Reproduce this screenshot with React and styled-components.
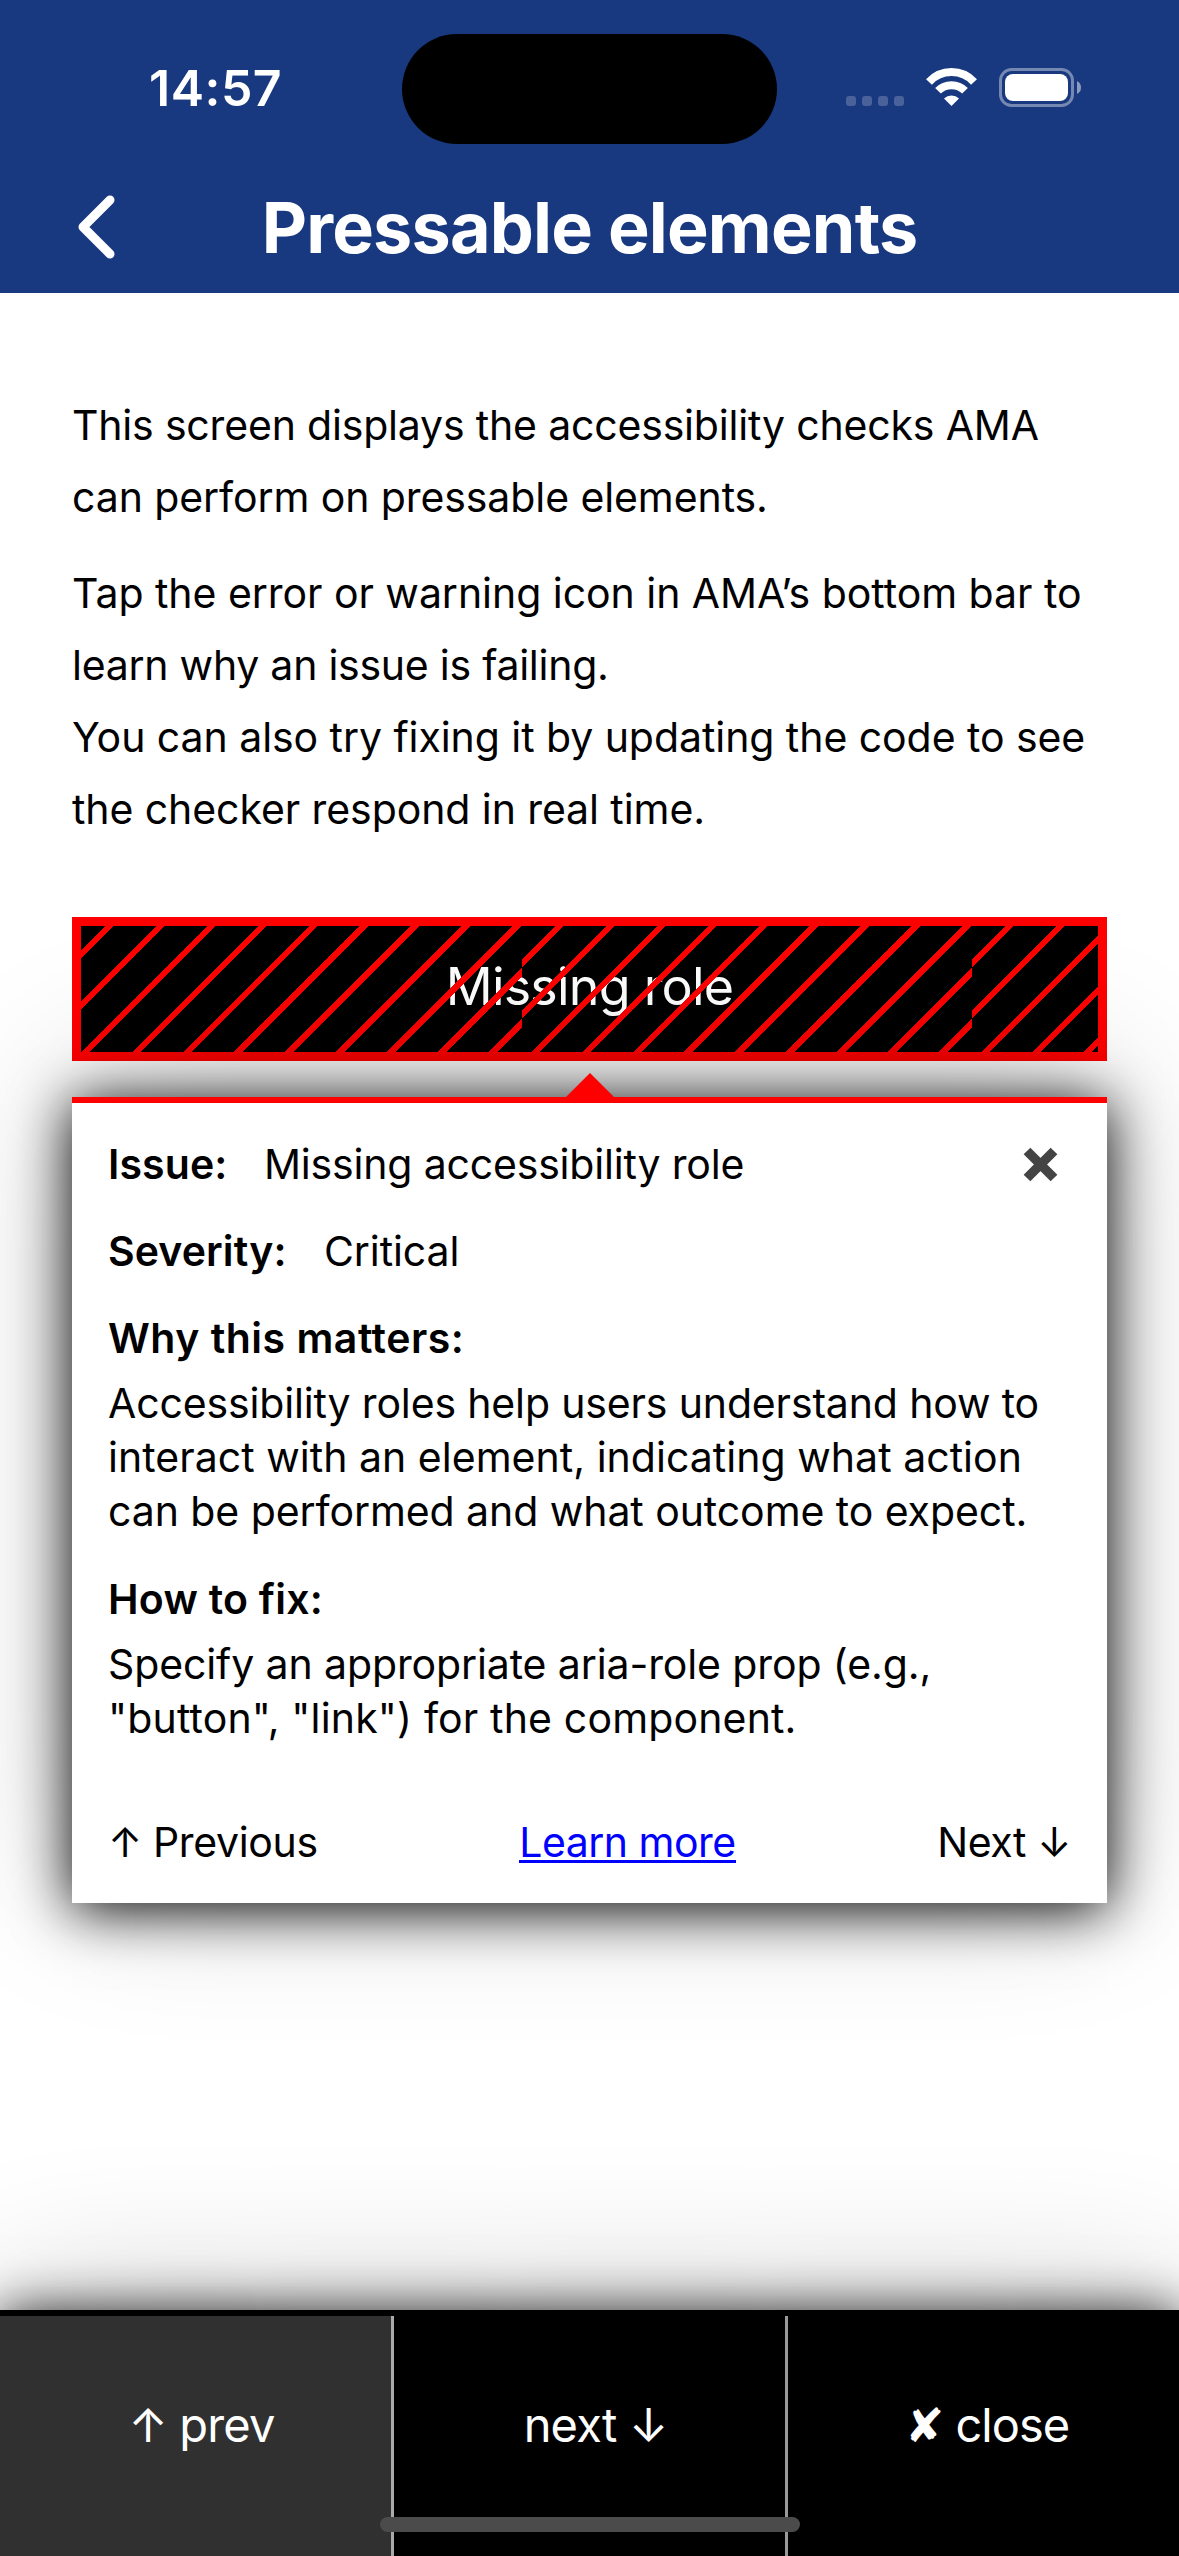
import React from "react";
import styled, { createGlobalStyle, css } from "styled-components";

const Global = createGlobalStyle`
  * { box-sizing: border-box; }
  html, body { margin: 0; padding: 0; background: #fff; }
  body {
    font-family: Inter, "Liberation Sans", sans-serif;
    font-variant-ligatures: none;
    color: #000;
  }
`;

const Screen = styled.main`
  position: relative;
  display: flex;
  flex-direction: column;
  width: 1179px;
  height: 2556px;
  overflow: hidden;
  background: #fff;
`;

const Header = styled.header`
  display: flex;
  flex-direction: column;
  height: 293px;
  background: #18387f;
  color: #fff;
`;

const StatusBar = styled.div`
  display: grid;
  grid-template-columns: 402px 375px 1fr;
  height: 178px;
  padding-top: 34px;
`;

const Clock = styled.time`
  height: 110px;
  padding-left: 149px;
  font-size: 50px;
  font-weight: 600;
  line-height: 108px;
  letter-spacing: ${(p) => p.$tracking}px;
`;

const Island = styled.div`
  height: 110px;
  border-radius: 55px;
  background: #000;
`;

const StatusIcons = styled.div`
  padding: 34px 0 0 69px;
  svg { display: block; }
`;

const TitleBar = styled.div`
  display: grid;
  grid-template-columns: 192px 1fr 192px;
  align-items: center;
  height: 100px;
`;

const BackButton = styled.button`
  display: flex;
  height: 100px;
  padding: 16px 0 0 76px;
  border: 0;
  background: none;
`;

const Title = styled.h1`
  margin: 0;
  font-size: 70px;
  font-weight: 700;
  line-height: 100px;
  text-align: center;
  white-space: nowrap;
  letter-spacing: ${(p) => p.$tracking}px;
`;

const Content = styled.section`
  flex: 1;
  padding: 96px 72px 0;
`;

const Paragraph = styled.p`
  margin: 0 0 24px;
  font-size: 41px;
  line-height: ${(p) => (p.$compact ? 54 : 72)}px;
  ${(p) => p.$compact && css`margin: 0;`}
`;

const Line = styled.span`
  display: block;
  white-space: nowrap;
  letter-spacing: ${(p) => p.$tracking || 0}px;
`;

const Pressable = styled.button`
  position: relative;
  display: block;
  width: 1035px;
  height: 144px;
  margin-top: 72px;
  padding: 0 0 5px;
  border: 9px solid #f00;
  background: #000;
  color: #fff;
  font: 400 52px/120px Inter, sans-serif;
  letter-spacing: ${(p) => p.$tracking}px;
`;

const Stripes = styled.span`
  position: absolute;
  inset: -9px;
  border: 9px solid #f00;
  background-image: repeating-linear-gradient(135deg, transparent 0 30px, #f00 30px 36px);
  background-size: 450px 450px;
  background-origin: border-box;
`;

const Card = styled.article`
  position: relative;
  height: 806px;
  margin-top: 36px;
  padding: 34px 36px;
  border-top: 6px solid #f00;
  background: #fff;
  font-size: 41px;
  line-height: 54px;
  box-shadow: 0 6px 54px rgba(0, 0, 0, 0.98), 0 -20px 150px rgba(0, 0, 0, 0.2);
`;

const Pointer = styled.i`
  position: absolute;
  left: 494px;
  top: -30px;
  border: solid transparent;
  border-width: 0 24px 24px;
  border-bottom-color: #f00;
`;

const Row = styled.div`
  display: flex;
  align-items: flex-start;
  margin-bottom: 33px;
`;

const Label = styled.strong`
  width: ${(p) => p.$width}px;
  font-weight: 600;
  white-space: nowrap;
  letter-spacing: ${(p) => p.$tracking || 0}px;
`;

const Heading = styled.h2`
  margin: ${(p) => p.$top || 0}px 0 11px;
  font-size: 41px;
  font-weight: 600;
  letter-spacing: ${(p) => p.$tracking || 0}px;
`;

const CloseButton = styled.button`
  margin-left: auto;
  padding: 10px 13px 0 0;
  border: 0;
  background: none;
  svg { display: block; }
`;

const CardFooter = styled.footer`
  display: flex;
  justify-content: space-between;
  margin-top: 70px;
`;

const Nav = styled.span`
  white-space: pre;
  letter-spacing: ${(p) => p.$tracking || 0}px;
`;

const Learn = styled.a`
  height: 48px;
  border-bottom: 3px solid #00f;
  color: #00f;
  letter-spacing: ${(p) => p.$tracking || 0}px;
`;

const BottomBar = styled.nav`
  position: relative;
  display: grid;
  grid-template-columns: 394px 394px 1fr;
  height: 246px;
  border-top: 6px solid #000;
  background: #000;
  color: #fff;
  box-shadow: 0 6px 54px rgba(0, 0, 0, 0.98), 0 -10px 160px rgba(0, 0, 0, 0.2);
`;

const Tab = styled.button`
  padding: 0 0 22px ${(p) => (p.$line ? 12 : 7)}px;
  border: 0;
  border-right: ${(p) => (p.$line ? `3px solid ${p.$line}` : "0")};
  background: ${(p) => (p.$dim ? "#303030" : "#000")};
  color: #fff;
  font: 400 47px/60px Inter, "DejaVu Sans", sans-serif;
  white-space: pre;
  letter-spacing: ${(p) => p.$tracking || 0}px;
`;

const HomeIndicator = styled.div`
  position: absolute;
  left: 380px;
  bottom: 24px;
  width: 420px;
  height: 15px;
  border-radius: 8px;
  background: #4b4b4b;
`;

const StatusGlyphs = () => (
  <svg width="236" height="40" viewBox="0 0 236 40">
    {[0, 16, 32, 48].map((x) => (
      <rect key={x} x={x} y="28" width="10" height="10" rx="3" fill="#4a629a" />
    ))}
    <g fill="none" stroke="#fff" strokeWidth="8">
      <path d="M83 14 A30.5 30.5 0 0 1 128 14" />
      <path d="M92 22.8 A19 19 0 0 1 119 22.8" />
    </g>
    <path d="M105.500 38 L98 30.500 A11 11 0 0 1 113 30.500 Z" fill="#fff" />
    <rect x="154.500" y="1.500" width="72" height="36" rx="11" fill="none" stroke="#7488b2" strokeWidth="3" />
    <rect x="159" y="6" width="63" height="27" rx="8" fill="#fff" />
    <path d="M231 13 Q235 15 235 19.500 Q235 24 231 26 Z" fill="#8c9bbf" />
  </svg>
);

export default function App() {
  return (
    <>
      <Global />
      <Screen>
        <Header>
          <StatusBar>
            <Clock $tracking={0.5}>14:57</Clock>
            <Island />
            <StatusIcons><StatusGlyphs /></StatusIcons>
          </StatusBar>
          <TitleBar>
            <BackButton aria-label="Back">
              <svg width="42" height="66" viewBox="0 0 42 66">
                <path d="M34 6 L7 33 L34 60" fill="none" stroke="#fff" strokeWidth="9" strokeLinecap="round" strokeLinejoin="round" />
              </svg>
            </BackButton>
            <Title $tracking={-0.8}>Pressable elements</Title>
          </TitleBar>
        </Header>
        <Content>
          <Paragraph>
            <Line $tracking={-0.18}>This screen displays the accessibility checks AMA</Line>
            <Line $tracking={-0.09}>can perform on pressable elements.</Line>
          </Paragraph>
          <Paragraph>
            <Line $tracking={-0.04}>Tap the error or warning icon in AMA’s bottom bar to</Line>
            <Line $tracking={-0.25}>learn why an issue is failing.</Line>
            <Line $tracking={-0.06}>You can also try fixing it by updating the code to see</Line>
            <Line $tracking={-0.08}>the checker respond in real time.</Line>
          </Paragraph>
          <Pressable $tracking={-0.8}>
            Missing role
            <Stripes />
          </Pressable>
          <Card>
            <Pointer />
            <Row>
              <Label $width={156} $tracking={0.1}>Issue:</Label>
              <Line $tracking={-0.18}>Missing accessibility role</Line>
              <CloseButton aria-label="Close">
                <svg width="35" height="35" viewBox="0 0 35 35">
                  <path d="M4 4 L31 31 M31 4 L4 31" stroke="#444" strokeWidth="9.500" />
                </svg>
              </CloseButton>
            </Row>
            <Row>
              <Label $width={216} $tracking={0.1}>Severity:</Label>
              <Line $tracking={-0.1}>Critical</Line>
            </Row>
            <Heading $tracking={0.5}>Why this matters:</Heading>
            <Paragraph $compact>
              <Line $tracking={-0.15}>Accessibility roles help users understand how to</Line>
              <Line $tracking={0.03}>interact with an element, indicating what action</Line>
              <Line $tracking={-0.07}>can be performed and what outcome to expect.</Line>
            </Paragraph>
            <Heading $top={34} $tracking={0.25}>How to fix:</Heading>
            <Paragraph $compact>
              <Line $tracking={-0.11}>Specify an appropriate aria-role prop (e.g.,</Line>
              <Line $tracking={0.16}>"button", "link") for the component.</Line>
            </Paragraph>
            <CardFooter>
              <Nav $tracking={-0.35}>↑ Previous</Nav>
              <Learn $tracking={-0.5}>Learn more</Learn>
              <Nav $tracking={-0.4}>Next ↓</Nav>
            </CardFooter>
          </Card>
        </Content>
        <BottomBar>
          <Tab $dim $line="#aaa" $tracking={-0.8}>↑ prev</Tab>
          <Tab $line="#999" $tracking={-0.8}>next ↓</Tab>
          <Tab $tracking={-1}>✘ close</Tab>
          <HomeIndicator />
        </BottomBar>
      </Screen>
    </>
  );
}
